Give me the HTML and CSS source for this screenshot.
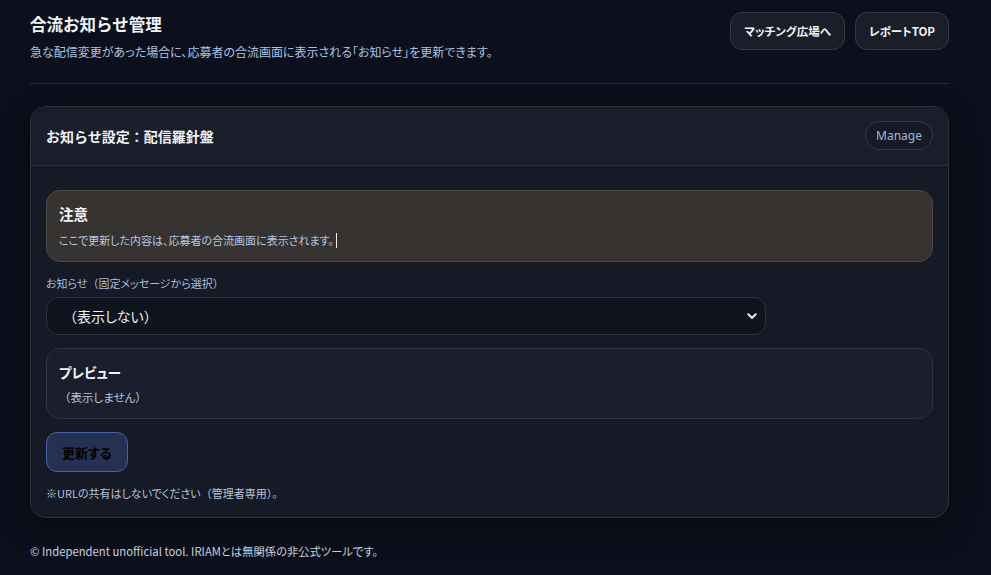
FILE: index.html
```html
<!DOCTYPE html>
<html lang="ja">
<head>
<meta charset="utf-8">
<title>合流お知らせ管理</title>
<link rel="stylesheet" href="styles.css">
</head>
<body>
<div class="page">
  <header class="top">
    <div class="top-text">
      <h1 class="title">合流お知らせ管理</h1>
      <p class="subtitle">急な配信変更があった場合に、応募者の合流画面に表示される「お知らせ」を更新できます。</p>
    </div>
    <nav class="top-actions">
      <a class="pill-btn">マッチング広場へ</a>
      <a class="pill-btn">レポートTOP</a>
    </nav>
  </header>

  <section class="card">
    <div class="card-head">
      <h2 class="card-title">お知らせ設定：配信羅針盤</h2>
      <a class="manage">Manage</a>
    </div>
    <div class="card-body">
      <div class="notice">
        <div class="notice-title">注意</div>
        <div class="notice-text">ここで更新した内容は、応募者の合流画面に表示されます。<span class="caret"></span></div>
      </div>

      <label class="field-label">お知らせ<span class="fw">（</span>固定メッセージから選択<span class="fw">）</span></label>
      <div class="select">
        <span class="select-value"><span class="fw">（</span>表示しない<span class="fw">）</span></span>
        <svg class="chev" width="10" height="7" viewBox="0 0 10 7"><path d="M1.3 1.3 L5 5 L8.7 1.3" fill="none" stroke="#e8ecf4" stroke-width="2" stroke-linecap="round" stroke-linejoin="round"/></svg>
      </div>

      <div class="preview">
        <div class="preview-title">プレビュー</div>
        <div class="preview-text"><span class="fw">（</span>表示しません<span class="fw">）</span></div>
      </div>

      <button class="submit">更新する</button>
      <p class="note">※URLの共有はしないでください<span class="fw">（</span>管理者専用<span class="fw">）</span>。</p>
    </div>
  </section>

  <footer class="foot">© Independent unofficial tool. IRIAMとは無関係の非公式ツールです。</footer>
</div>
</body>
</html>
```

FILE: styles.css
```css
* { box-sizing: border-box; }
html, body { margin: 0; padding: 0; }
body {
  background: #0b101c;
  color: #e6eaf2;
  font-family: "Noto Sans CJK JP", "Noto Sans", sans-serif;
  font-feature-settings: "palt";
  width: 991px;
  height: 575px;
  overflow: hidden;
}
.fw { font-feature-settings: normal; }
.page {
  width: 919px;
  margin-left: 30px;
}
.top {
  display: flex;
  justify-content: space-between;
  align-items: flex-start;
  padding-top: 12px;
  padding-bottom: 22px;
  border-bottom: 1px solid #262b37;
}
.title {
  margin: 0;
  font-size: 16.5px;
  line-height: 24px;
  font-weight: 700;
  color: #f2f4f8;
  font-feature-settings: normal;
}
.subtitle {
  margin: 7px 0 0;
  font-size: 12px;
  line-height: 18px;
  color: #aec3e3;
}
.top-actions {
  display: flex;
  gap: 10px;
}
.pill-btn {
  display: flex;
  align-items: center;
  height: 38px;
  padding: 0 13px;
  border: 1px solid #323846;
  border-radius: 12px;
  background: #191e29;
  color: #f0f2f6;
  font-size: 11.5px;
  font-weight: 700;
}
.card {
  margin-top: 22px;
  border: 1px solid #2b303d;
  border-radius: 16px;
  background: #151a26;
  overflow: hidden;
  box-shadow: 0 10px 30px rgba(0,0,0,0.35);
}
.card-head {
  display: flex;
  justify-content: space-between;
  align-items: center;
  padding: 14px 15px 15px 15px;
  background: #1a1e2b;
  border-bottom: 1px solid #2d3240;
}
.card-title {
  margin: 0;
  font-size: 14px;
  font-weight: 700;
  color: #f0f2f6;
  font-feature-settings: normal;
}
.manage {
  display: flex;
  align-items: center;
  height: 29px;
  padding: 0 10px;
  border: 1px solid #353a47;
  border-radius: 15px;
  background: #161a25;
  color: #9cb6de;
  font-family: "Noto Sans", sans-serif;
  font-size: 12px;
}
.card-body {
  padding: 24px 15px 16px 15px;
  display: flex;
  flex-direction: column;
  align-items: flex-start;
}
.notice {
  align-self: stretch;
  background: #363330;
  border: 1px solid #4b4845;
  border-radius: 14px;
  padding: 13px 12px 12px;
}
.notice-title {
  font-size: 14.5px;
  font-weight: 700;
  line-height: 20px;
  color: #f3f4f6;
}
.notice-text {
  margin-top: 7px;
  font-size: 11px;
  line-height: 18px;
  color: #b4c6e6;
  display: flex;
  align-items: center;
}
.caret {
  display: inline-block;
  width: 1px;
  height: 15px;
  margin-left: 2px;
  background: #e8ecf4;
}
.field-label {
  margin-top: 13px;
  font-size: 11px;
  line-height: 16px;
  color: #a9bedf;
}
.select {
  margin-top: 6px;
  width: 720px;
  height: 38px;
  display: flex;
  align-items: center;
  justify-content: space-between;
  padding: 0 8px 0 16px;
  background: #10141e;
  border: 1px solid #2c3140;
  border-radius: 12px;
}
.select-value {
  font-size: 14px;
  color: #eef1f6;
}
.preview {
  align-self: stretch;
  margin-top: 13px;
  background: #1b1f2d;
  border: 1px solid #2f3444;
  border-radius: 14px;
  padding: 13px 12px 12px;
}
.preview-title {
  font-size: 13.5px;
  font-weight: 700;
  line-height: 20px;
  color: #f3f4f6;
}
.preview-text {
  margin-top: 6px;
  font-size: 11.5px;
  line-height: 18px;
  color: #b8c4d8;
}
.submit {
  margin-top: 13px;
  height: 40px;
  padding: 0 15px;
  background: #263152;
  border: 1px solid #4862a2;
  border-radius: 11px;
  color: #000000;
  font-family: inherit;
  font-feature-settings: "palt";
  font-size: 13px;
  font-weight: 700;
}
.note {
  margin: 13px 0 0;
  font-size: 11px;
  line-height: 16px;
  color: #b6c3d8;
}
.foot {
  margin-top: 24px;
  font-size: 11.3px;
  line-height: 18px;
  color: #c9d1de;
}
```
